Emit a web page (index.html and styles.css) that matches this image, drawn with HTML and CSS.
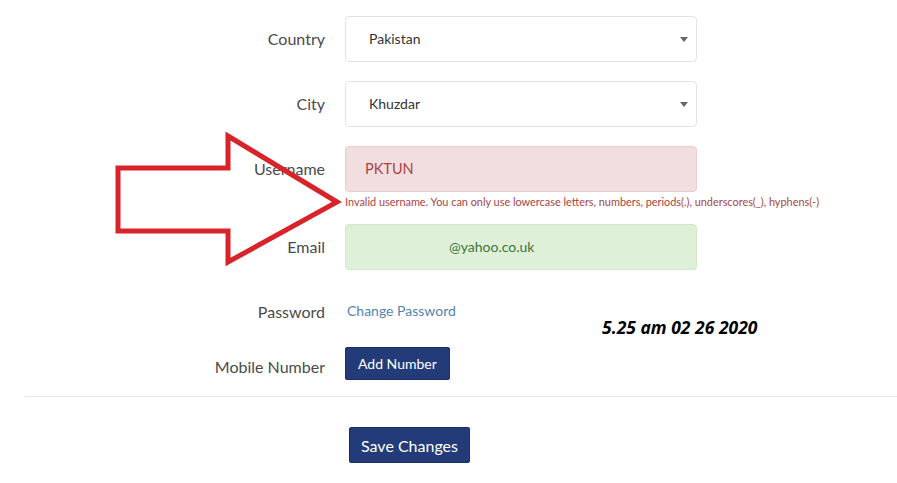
FILE: index.html
```html
<!DOCTYPE html>
<html>
<head>
  <title>Edit Profile</title>
  <link rel="stylesheet" href="styles.css">
</head>
<body>
<div id="page">
  <form id="profile">
    <div class="row">
      <label class="label">Country</label>
      <div class="field select">Pakistan<span class="caret"></span></div>
    </div>
    <div class="row">
      <label class="label">City</label>
      <div class="field select">Khuzdar<span class="caret"></span></div>
    </div>
    <div class="row">
      <label class="label">Username</label>
      <div>
        <div class="field error">PKTUN</div>
        <div class="help">Invalid username. You can only use lowercase letters, numbers, periods(.), underscores(_), hyphens(-)</div>
      </div>
    </div>
    <div class="row email-row">
      <label class="label">Email</label>
      <div class="field success"><span class="email-value">@yahoo.co.uk</span></div>
    </div>
    <div class="row password-row">
      <label class="label">Password</label>
      <div><a class="link" href="#">Change Password</a></div>
    </div>
    <div class="row mobile-row">
      <label class="label">Mobile Number</label>
      <div><button type="button" class="btn">Add Number</button></div>
    </div>
    <hr class="divider">
    <div class="row save-row">
      <div></div>
      <div><button type="button" class="btn btn-save">Save Changes</button></div>
    </div>
  </form>

  <svg id="arrow" width="240" height="140" viewBox="0 0 240 140">
    <polygon points="8,42 118,42 118,10 227,76 118,136 118,105 8,105" fill="none" stroke="#d8232a" stroke-width="5" stroke-linejoin="miter"/>
  </svg>
  <div id="stamp">5.25 am 02 26 2020</div>
</div>
</body>
</html>
```

FILE: styles.css
```css
body {
  margin: 0;
  padding: 0;
  font-family: "Lato", "Open Sans", Arial, sans-serif;
  color: #444;
  background: #fff;
}
#page {
  position: relative;
  width: 897px;
  height: 483px;
  overflow: hidden;
}
#profile {
  padding-top: 16px;
}
.row {
  display: grid;
  grid-template-columns: 325px 352px;
  column-gap: 20px;
  align-items: start;
  margin-bottom: 19px;
}
.label {
  font-size: 16px;
  color: #4a4a4a;
  text-align: right;
  line-height: 46px;
}
.field {
  box-sizing: border-box;
  height: 46px;
  border: 1px solid #e3e3e3;
  border-radius: 4px;
  padding: 0 23px;
  font-size: 14px;
  line-height: 44px;
  color: #333;
  position: relative;
}
.caret {
  position: absolute;
  right: 8px;
  top: 20px;
  width: 0;
  height: 0;
  border-left: 4px solid transparent;
  border-right: 4px solid transparent;
  border-top: 5px solid #666;
}
.error {
  background: #f2dede;
  border-color: #ebccd1;
  color: #a94442;
  padding-left: 19px;
  font-size: 14.5px;
}
.help {
  font-size: 10.9px;
  color: #a94442;
  line-height: 16px;
  margin-top: 2px;
  white-space: nowrap;
}
.email-row {
  margin-top: -5px;
}
.success {
  background: #dff0d8;
  border-color: #d0e9c6;
  color: #3c763d;
}
.email-value {
  padding-left: 80px;
}
.password-row {
  margin-bottom: 12px;
}
.link {
  display: inline-block;
  margin-left: 2px;
  font-size: 14px;
  line-height: 44px;
  color: #5585ad;
  text-decoration: none;
}
.mobile-row {
  margin-bottom: 0;
}
.mobile-row .label {
  line-height: 39px;
}
.btn {
  font-family: "Lato", Arial, sans-serif;
  font-size: 14px;
  color: #fff;
  background: #233b78;
  border: 1px solid #1c2f63;
  border-radius: 2px;
  height: 33px;
  padding: 0 12px;
  cursor: pointer;
}
.divider {
  border: 0;
  border-top: 1px solid #e8e8e8;
  margin: 10px 0 30px 25px;
}
.btn-save {
  margin-left: 4px;
  font-size: 16px;
  height: 36px;
  padding: 0 11px;
}
#arrow {
  position: absolute;
  left: 110px;
  top: 126px;
}
#stamp {
  position: absolute;
  left: 602px;
  top: 315px;
  font-family: "Open Sans", Arial, sans-serif;
  font-weight: bold;
  font-style: italic;
  font-size: 17.5px;
  color: #000;
}
```
